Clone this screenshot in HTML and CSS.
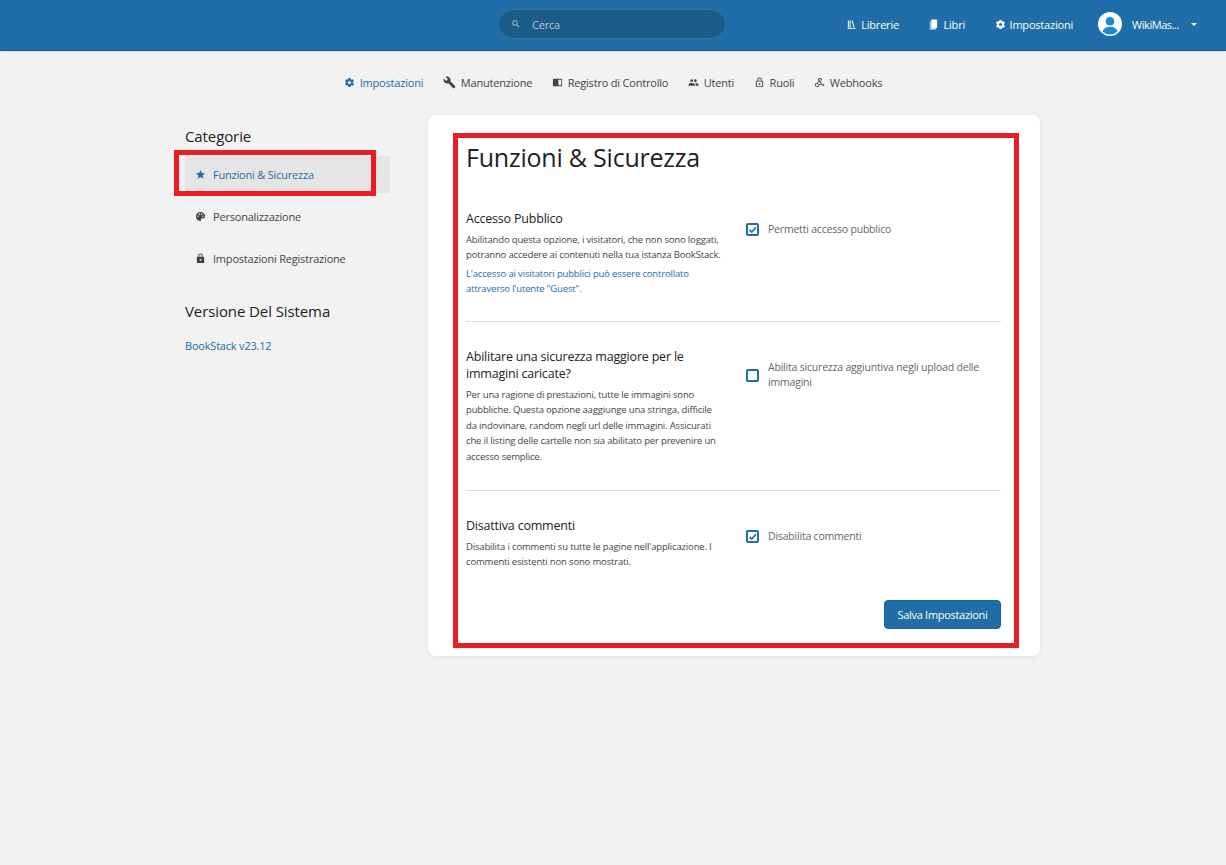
FILE: index.html
```html
<!DOCTYPE html>
<html lang="it">
<head>
<meta charset="utf-8">
<title>Impostazioni</title>
<link rel="stylesheet" href="styles.css">
</head>
<body>
<svg class="defs" width="0" height="0" aria-hidden="true">
  <symbol id="i-gear" viewBox="0 0 24 24"><path d="M19.4 13a7.5 7.5 0 0 0 0-2l2.1-1.6a.5.5 0 0 0 .1-.6l-2-3.5a.5.5 0 0 0-.6-.2l-2.5 1a7.3 7.3 0 0 0-1.7-1l-.4-2.7a.5.5 0 0 0-.5-.4h-4a.5.5 0 0 0-.5.4l-.4 2.7a7.3 7.3 0 0 0-1.7 1l-2.5-1a.5.5 0 0 0-.6.2l-2 3.5a.5.5 0 0 0 .1.6L4.6 11a7.5 7.5 0 0 0 0 2l-2.1 1.6a.5.5 0 0 0-.1.6l2 3.5a.5.5 0 0 0 .6.2l2.5-1a7.3 7.3 0 0 0 1.7 1l.4 2.7a.5.5 0 0 0 .5.4h4a.5.5 0 0 0 .5-.4l.4-2.7a7.3 7.3 0 0 0 1.7-1l2.5 1a.5.5 0 0 0 .6-.2l2-3.5a.5.5 0 0 0-.1-.6zM12 15.5a3.5 3.5 0 1 1 0-7 3.5 3.5 0 0 1 0 7z"/></symbol>
  <symbol id="i-search" viewBox="0 0 24 24"><path d="M15.5 14h-.79l-.28-.27A6.471 6.471 0 0 0 16 9.5 6.5 6.5 0 1 0 9.5 16c1.61 0 3.09-.59 4.23-1.57l.27.28v.79l5 4.99L20.49 19l-4.99-5zm-6 0C7.01 14 5 11.99 5 9.5S7.01 5 9.5 5 14 7.01 14 9.5 11.99 14 9.5 14z"/></symbol>
  <symbol id="i-shelves" viewBox="0 0 24 24"><path d="M4 3h2.2v16H4zm4 0h2.2v16H8zm4.200.6 2.100-.6 4.700 15.400-2.100.6zM3 20h18v2H3z"/></symbol>
  <symbol id="i-books" viewBox="0 0 24 24"><path d="M9 1h9a2 2 0 0 1 2 2v15a2 2 0 0 1-2 2H9a2 2 0 0 1-2-2V3a2 2 0 0 1 2-2zM4 5h1.500v15.500H17V23H6a2 2 0 0 1-2-2z"/></symbol>
  <symbol id="i-wrench" viewBox="0 0 24 24"><path d="M22.7 19 13.6 9.9c.9-2.3.4-5-1.5-6.9-2-2-5-2.4-7.4-1.3L9 6 6 9 1.600 4.700C.4 7.100.9 10.100 2.900 12.100c1.900 1.900 4.600 2.400 6.900 1.500l9.100 9.100c.4.400 1 .4 1.400 0l2.300-2.300c.5-.4.5-1.100.1-1.400z"/></symbol>
  <symbol id="i-audit" viewBox="0 0 24 24"><path d="M3 4h9.500v16H3a1 1 0 0 1-1-1V5a1 1 0 0 1 1-1zm9.500 0H21a1 1 0 0 1 1 1v14a1 1 0 0 1-1 1h-8.500zm1.500 1.800v12.400h6.200V5.800z"/></symbol>
  <symbol id="i-users" viewBox="0 0 24 24"><path d="M16 11a3 3 0 1 0 0-6 3 3 0 0 0 0 6zm-8 0a3 3 0 1 0 0-6 3 3 0 0 0 0 6zm0 2c-2.300 0-7 1.200-7 3.500V19h14v-2.500C15 14.200 10.300 13 8 13zm8 0h-1c1.200.8 2 2 2 3.500V19h6v-2.500c0-2.300-4.700-3.500-7-3.500z"/></symbol>
  <symbol id="i-lock-o" viewBox="0 0 24 24"><path d="M18 8h-1V6a5 5 0 0 0-10 0v2H6a2 2 0 0 0-2 2v10a2 2 0 0 0 2 2h12a2 2 0 0 0 2-2V10a2 2 0 0 0-2-2zM9 6a3 3 0 0 1 6 0v2H9zm9 14H6V10h12zm-6-3a2 2 0 1 0 0-4 2 2 0 0 0 0 4z"/></symbol>
  <symbol id="i-hook" viewBox="0 0 24 24"><path d="M10 15h5.900a2.500 2.500 0 1 1 0 2H12a5 5 0 1 1-6.700-4.700v2.200A3 3 0 1 0 10 17zm2.500-13a4.500 4.500 0 0 1 4.400 5.500L15 7a2.500 2.500 0 1 0-3.800 2.100L8.500 14a1.500 1.500 0 1 1-1.700-1l2.400-3.900A4.500 4.500 0 0 1 12.500 2zm.3 5a1.500 1.500 0 0 1 1.300 2.300l2.500 4a5 5 0 0 1 5.400 6.700l-1.900-.7a3 3 0 0 0-4.500-3.500l-3.500-5.700A1.500 1.500 0 0 1 12.800 7z"/></symbol>
  <symbol id="i-star" viewBox="0 0 24 24"><path d="m12 17.300 6.200 3.700-1.600-7L22 9.200l-7.200-.6L12 2 9.200 8.600 2 9.200 7.500 14l-1.700 7z"/></symbol>
  <symbol id="i-palette" viewBox="0 0 24 24"><path d="M12 2a10 10 0 0 0 0 20c.9 0 1.600-.7 1.600-1.600 0-.4-.1-.8-.4-1.100-.3-.3-.4-.7-.4-1.100 0-.9.700-1.600 1.600-1.600H16.500a5.500 5.500 0 0 0 5.500-5.500C22 6 17.500 2 12 2zM6.500 13a1.700 1.700 0 1 1 0-3.400 1.700 1.700 0 0 1 0 3.400zm3-4.500a1.700 1.700 0 1 1 0-3.400 1.700 1.700 0 0 1 0 3.400zm5 0a1.700 1.700 0 1 1 0-3.400 1.700 1.700 0 0 1 0 3.400zm3 4.500a1.700 1.700 0 1 1 0-3.400 1.700 1.700 0 0 1 0 3.400z"/></symbol>
  <symbol id="i-lock" viewBox="0 0 24 24"><path d="M18 8h-1V6a5 5 0 0 0-10 0v2H6a2 2 0 0 0-2 2v10a2 2 0 0 0 2 2h12a2 2 0 0 0 2-2V10a2 2 0 0 0-2-2zm-6 9a2 2 0 1 1 0-4 2 2 0 0 1 0 4zm3-9H9V6a3 3 0 0 1 6 0z"/></symbol>
  <symbol id="i-tick" viewBox="0 0 24 24"><path d="M4 13l6 6L21 6" fill="none" stroke="#206ea7" stroke-width="4.500"/></symbol>
</svg>

<header class="topbar">
  <div class="search">
    <svg class="ico search-ico"><use href="#i-search"/></svg>
    <span>Cerca</span>
  </div>
  <nav class="topnav">
    <a class="toplink"><svg class="ico"><use href="#i-shelves"/></svg>Librerie</a>
    <a class="toplink"><svg class="ico"><use href="#i-books"/></svg>Libri</a>
    <a class="toplink"><svg class="ico"><use href="#i-gear"/></svg>Impostazioni</a>
    <a class="user">
      <svg class="avatar" viewBox="0 0 24 24"><circle cx="12" cy="12" r="12" fill="#fff"/><circle cx="12" cy="9.200" r="4.300" fill="#1d87d1"/><path d="M4.500 19.500c1-3.500 4.500-4.700 7.500-4.700s6.500 1.200 7.500 4.700A11 11 0 0 1 12 22.500a11 11 0 0 1-7.500-3z" fill="#1d87d1"/></svg>
      <span class="user-name">WikiMas...</span>
      <i class="caret"></i>
    </a>
  </nav>
</header>

<nav class="subnav">
  <a class="sublink active"><svg class="ico"><use href="#i-gear"/></svg>Impostazioni</a>
  <a class="sublink"><svg class="ico wide"><use href="#i-wrench"/></svg>Manutenzione</a>
  <a class="sublink"><svg class="ico"><use href="#i-audit"/></svg>Registro di Controllo</a>
  <a class="sublink"><svg class="ico"><use href="#i-users"/></svg>Utenti</a>
  <a class="sublink"><svg class="ico"><use href="#i-lock-o"/></svg>Ruoli</a>
  <a class="sublink"><svg class="ico"><use href="#i-hook"/></svg>Webhooks</a>
</nav>

<main class="layout">
  <aside class="side">
    <h5 class="side-title">Categorie</h5>
    <div class="side-menu">
      <a class="side-item selected"><svg class="ico"><use href="#i-star"/></svg>Funzioni &amp; Sicurezza</a>
      <a class="side-item"><svg class="ico"><use href="#i-palette"/></svg>Personalizzazione</a>
      <a class="side-item"><svg class="ico"><use href="#i-lock"/></svg>Impostazioni Registrazione</a>
    </div>
    <h5 class="side-title version-title">Versione Del Sistema</h5>
    <a class="version">BookStack v23.12</a>
  </aside>

  <section class="card">
    <h1 class="card-title">Funzioni &amp; Sicurezza</h1>

    <div class="setting first">
      <div class="setting-text">
        <h2>Accesso Pubblico</h2>
        <p>Abilitando questa opzione, i visitatori, che non sono loggati, potranno accedere ai contenuti nella tua istanza BookStack.</p>
        <p class="link">L'accesso ai visitatori pubblici può essere controllato attraverso l'utente "Guest".</p>
      </div>
      <label class="check"><i class="box"><svg class="tick"><use href="#i-tick"/></svg></i><span>Permetti accesso pubblico</span></label>
    </div>

    <div class="setting second">
      <div class="setting-text">
        <h2>Abilitare una sicurezza maggiore per le immagini caricate?</h2>
        <p>Per una ragione di prestazioni, tutte le immagini sono pubbliche. Questa opzione aaggiunge una stringa, difficile da indovinare, random negli url delle immagini. Assicurati che il listing delle cartelle non sia abilitato per prevenire un accesso semplice.</p>
      </div>
      <label class="check"><i class="box"></i><span>Abilita sicurezza aggiuntiva negli upload delle immagini</span></label>
    </div>

    <div class="setting third">
      <div class="setting-text">
        <h2>Disattiva commenti</h2>
        <p>Disabilita i commenti su tutte le pagine nell'applicazione. I commenti esistenti non sono mostrati.</p>
      </div>
      <label class="check"><i class="box"><svg class="tick"><use href="#i-tick"/></svg></i><span>Disabilita commenti</span></label>
    </div>

    <div class="actions"><button class="save">Salva Impostazioni</button></div>
  </section>
</main>

<div class="mark mark-side"></div>
<div class="mark mark-card"></div>
</body>
</html>
```
FILE: styles.css
```css
* { box-sizing: border-box; }
html, body { margin: 0; padding: 0; }
body {
  height: 865px;
  overflow: hidden;
  position: relative;
  background: #f2f2f2;
  color: #444;
  font-family: "Open Sans", "Noto Sans", sans-serif;
  font-size: 11px;
  letter-spacing: -0.2px;
}
.defs { position: absolute; }
.ico { width: 11px; height: 11px; fill: currentColor; fill-rule: evenodd; flex: none; }
.ico.wide { width: 13px; height: 13px; }

.topbar {
  height: 51px;
  background: #206ea7;
  border-bottom: 1px solid #1a5f92;
  box-shadow: 0 1px 2px rgba(0,0,0,.1);
  display: flex;
  align-items: center;
  padding-left: 498px;
  padding-right: 29px;
  padding-bottom: 2px;
  color: #fff;
}
.search {
  width: 228px;
  height: 30px;
  border-radius: 15px;
  background: #1c5c88;
  border: 1px solid #2f76a8;
  display: flex;
  align-items: center;
  gap: 11px;
  padding-left: 12px;
  color: #b4c8d8;
  font-size: 11px;
}
.search-ico { width: 10px; height: 10px; }
.topnav { margin-left: auto; display: flex; align-items: center; gap: 29.500px; font-size: 11px; }
.toplink { display: flex; align-items: center; gap: 4px; }
.user { display: flex; align-items: center; margin-left: -4.500px; }
.avatar { width: 24px; height: 24px; margin-right: 10px; }
.user-name { letter-spacing: -0.45px; }
.caret {
  width: 0; height: 0; margin-left: 12px; margin-top: 1px;
  border-left: 3.500px solid transparent;
  border-right: 3.500px solid transparent;
  border-top: 3.500px solid #fff;
}

.subnav {
  display: flex;
  justify-content: center;
  gap: 19.500px;
  margin-top: 23px;
  height: 16px;
  align-items: center;
  color: #444;
}
.sublink { display: flex; align-items: center; gap: 5px; }
.sublink.active { color: #206ea7; }

.layout {
  display: grid;
  grid-template-columns: 205px 612px;
  gap: 38px;
  margin: 25px 0 0 185px;
  align-items: start;
}
.side-title {
  margin: 13px 0 0;
  font-size: 15px;
  font-weight: 400;
  line-height: 17px;
  color: #222;
  letter-spacing: -0.1px;
}
.side-menu { margin-top: 11px; display: flex; flex-direction: column; gap: 5px; }
.side-item {
  height: 37px;
  display: flex;
  align-items: center;
  gap: 7px;
  padding: 0 0 1px 10px;
  border-radius: 3px;
}
.side-item.selected { background: #e5e5e5; color: #206ea7; }
.version-title { margin-top: 26px; }
.version { display: block; margin-top: 17px; color: #206ea7; line-height: 17px; }

.card {
  background: #fff;
  border-radius: 8px;
  height: 541px;
  padding: 27px 39px 0 38px;
  box-shadow: 0 1px 6px -1px rgba(0,0,0,.1);
}
.card-title {
  margin: 0;
  font-size: 25px;
  font-weight: 400;
  line-height: 30px;
  color: #222;
  letter-spacing: -0.22px;
}
.setting { display: grid; grid-template-columns: 280px 255px; border-bottom: 1px solid #ddd; }
.setting.first { margin-top: 38px; height: 112px; }
.setting.second { height: 169px; padding-top: 26px; }
.setting.third { padding-top: 26px; border-bottom: 0; }
.setting-text { width: 258px; }
.setting h2 {
  margin: 0 0 5px;
  font-size: 12.500px;
  font-weight: 400;
  line-height: 17px;
  color: #222;
  letter-spacing: -0.2px;
}
.setting p {
  margin: 0 0 3px;
  font-size: 9.500px;
  line-height: 15.400px;
  color: #444;
  letter-spacing: -0.16px;
}
.setting p.link { color: #206ea7; }
.check {
  display: flex;
  align-items: center;
  align-self: start;
  gap: 9px;
  margin-top: 12px;
  color: #666;
  font-size: 10.500px;
  line-height: 15px;
}
.box {
  width: 13px; height: 13px;
  border: 2px solid #206ea7;
  border-radius: 2px;
  flex: none;
  display: flex;
}
.tick { width: 9px; height: 9px; }
.actions { display: flex; justify-content: flex-end; margin-top: 27px; }
.save {
  width: 117px;
  height: 29px;
  background: #206ea7;
  border: 1px solid #1c6295;
  border-radius: 4px;
  color: #fff;
  font: inherit;
  letter-spacing: -0.3px;
}

.mark { position: absolute; border: 5px solid #ed1c24; }
.mark-side { left: 174px; top: 150px; width: 202px; height: 46px; }
.mark-card { left: 453px; top: 133px; width: 566px; height: 515px; }
```
